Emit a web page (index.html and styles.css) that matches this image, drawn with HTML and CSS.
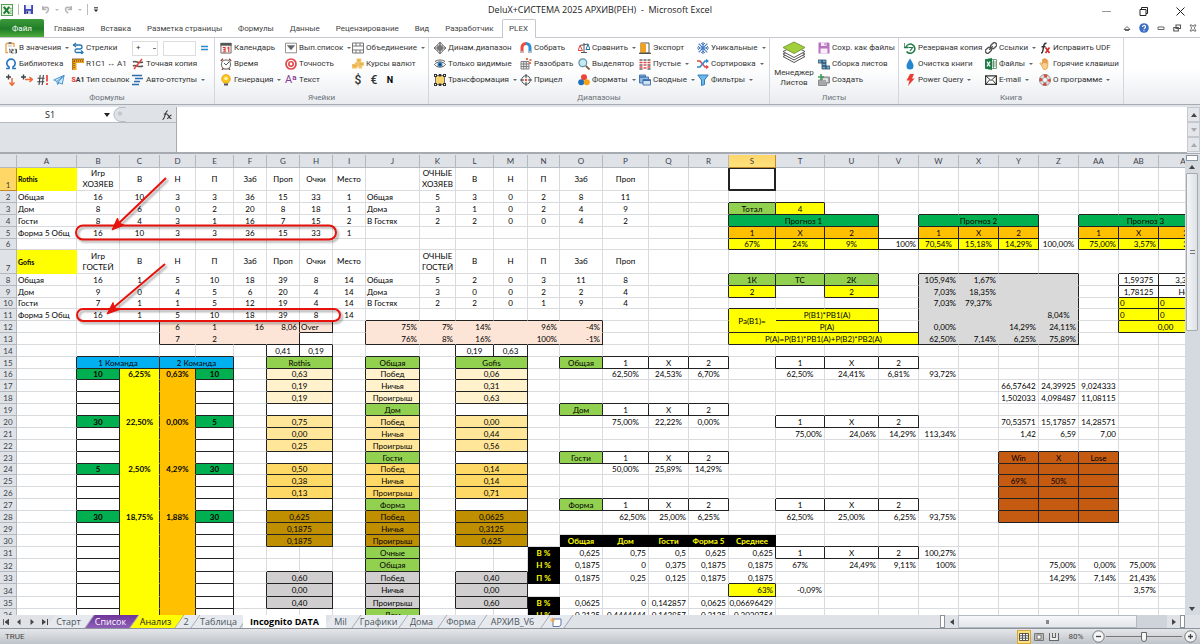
FILE: index.html
```html
<!DOCTYPE html>
<html lang="ru">
<head>
<meta charset="utf-8">
<title>DeluX+СИСТЕМА 2025 АРХИВ(РЕН) - Microsoft Excel</title>
<link rel="stylesheet" href="styles.css">
</head>
<body>
<svg class="defs" aria-hidden="true">
  <symbol id="i-paste" viewBox="0 0 12 12"><path d="M1 1.500h8v3.500M1 1.500v9h2" fill="none" stroke="#e8a04a" stroke-width="1.300"/><path d="M3.500 0h3v2h-3z" fill="#777"/><path d="M3 4h4" stroke="#aaa" stroke-width=".8"/><path d="M4 7.500 5 7v4M6.500 7.300h1.700v1.500H6.500V11h2M9.800 7.300h1.700V11H9.800M10 9h1.500" fill="none" stroke="#444" stroke-width=".9"/></symbol>
  <symbol id="i-arrows" viewBox="0 0 12 12"><path d="M1 3h7a2 2 0 0 1 0 4H4a2 2 0 0 0 0 3.500h7" fill="none" stroke="#2677b8" stroke-width="1.300"/><path d="M4 1 1.500 3 4 5M9 8.500l2 2-2 1.500" fill="none" stroke="#2677b8" stroke-width="1.200"/></symbol>
  <symbol id="i-omega" viewBox="0 0 12 12"><path d="M1 10.500h3v-1.500C2.500 8 1.800 6.800 1.800 5.300a4.200 4.200 0 0 1 8.400 0C10.200 6.800 9.500 8 8 9v1.500h3" fill="none" stroke="#2d78bd" stroke-width="1.700"/></symbol>
  <symbol id="i-ruler" viewBox="0 0 12 12"><path d="M0 1h12v4H4.500v7H0z" fill="#f0a21c"/><path d="M2 3h9M2 3v8" stroke="#5b3b10" stroke-width="1" stroke-dasharray="1 1"/><path d="M0 1h12M0 1v11" stroke="#6b4a17" stroke-width=".8"/></symbol>
  <symbol id="i-neq" viewBox="0 0 12 12"><path d="M1 4c3-2 5 2 10 0M1 8c3-2 5 2 10 0" fill="none" stroke="#555" stroke-width="1.600"/><path d="M2 11 10 1" stroke="#e8443c" stroke-width="1.500"/></symbol>
  <symbol id="i-plusdown" viewBox="0 0 12 12"><path d="M1 3h5M3.500.5v5" stroke="#444" stroke-width="1.400"/><path d="M7 4v7M4.500 8.500 7 11.300 9.500 8.500" fill="none" stroke="#ef6a35" stroke-width="1.500"/></symbol>
  <symbol id="i-plusright" viewBox="0 0 12 12"><path d="M0 3h5M2.500.5v5" stroke="#444" stroke-width="1.400"/><path d="M4 5.500h7M8.500 3l2.800 2.500L8.500 8" fill="none" stroke="#ef6a35" stroke-width="1.500"/></symbol>
  <symbol id="i-hash" viewBox="0 0 12 12"><path d="M3.200 1 2 11M6.400 1 5.200 11M.5 4.200h7M.3 7.800h7" stroke="#444" stroke-width="1.100"/><path d="M10 1v6.500M10 9v2" stroke="#ef3e36" stroke-width="1.700"/></symbol>
  <symbol id="i-plane" viewBox="0 0 13 12"><path d="M12 1 .8 6l3.400 1.500L12 1 5.500 8.500l4.500 2zM4.200 7.500 5 11l1.500-2" fill="#d8ebf8" stroke="#3f8ecb" stroke-width="1"/></symbol>
  <symbol id="i-indent" viewBox="0 0 12 12"><path d="M0 1.500h10M3 4.500h8M2 7.500h6M0 10.500h7" stroke="#2c6cae" stroke-width="1.700"/></symbol>
  <symbol id="i-cal" viewBox="0 0 13 12"><path d="M1 1h11v10.500H1z" fill="#f4f4f4" stroke="#666"/><path d="M.5.500h12v3H.5z" fill="#555"/><path d="M3 5.500h2.500v4.800H3M3.500 7.800h2M8 6.200l1.500-.9v5.200" fill="none" stroke="#e0352b" stroke-width="1.200"/></symbol>
  <symbol id="i-clock" viewBox="0 0 12 12"><circle cx="6" cy="6.500" r="4.600" fill="#fff" stroke="#777" stroke-width="1.100"/><path d="m4 5 2 2 3-3" fill="none" stroke="#555"/><path d="M.8 3 3 .8M11.200 3 9 .8M2 12l1.200-1.500M10 12l-1.200-1.500" stroke="#8b3e3a" stroke-width="1.300"/></symbol>
  <symbol id="i-bulb" viewBox="0 0 12 12"><path d="M6 .5a4.300 4.300 0 0 0-2.500 7.800V9h5v-.7A4.300 4.300 0 0 0 6 .5z" fill="#ffc61a" stroke="#e89b14" stroke-width=".8"/><circle cx="6" cy="4.500" r="1.800" fill="#fff3a8"/><path d="M4 9.500h4v2H4z" fill="#555"/></symbol>
  <symbol id="i-drop" viewBox="0 0 13 12"><path d="M.5.8h12v10.400H.5z" fill="#fff" stroke="#888"/><path d="M2 3h9L6.500 8.500z" fill="#666"/></symbol>
  <symbol id="i-target" viewBox="0 0 12 12"><circle cx="6" cy="6" r="5" fill="none" stroke="#e2474a" stroke-width="1.700"/><circle cx="6" cy="6" r="2.200" fill="none" stroke="#e2474a" stroke-width="1.600"/></symbol>
  <symbol id="i-grid" viewBox="0 0 12 12"><path d="M.5 1h11v10H.5zM.5 4h11M.5 8h11M4 1v3M8 1v3M4 8v3M8 8v3" fill="#fff" stroke="#777"/></symbol>
  <symbol id="i-coins" viewBox="0 0 13 12"><path d="M5 0h5v4h3v4h-2v3H7V8L5 11H0V6h3V4h2z" fill="#f2c266"/><path d="M1 8h4M6 2h3M8 6h4" stroke="#dca23c"/></symbol>
  <symbol id="i-dyn" viewBox="0 0 12 12"><path d="m6 0 2 2.500L12 6 8 9.500 6 12 4 9.500 0 6l4-3.500z" fill="none" stroke="#666"/><path d="M6 1v10M1 6h10M4 4h4v4H4z" stroke="#555" fill="none" stroke-width="1.200"/></symbol>
  <symbol id="i-eye" viewBox="0 0 12 12"><path d="M.5 6.500C3 3 9 3 11.500 6.500 9 10 3 10 .5 6.500z" fill="#fff" stroke="#555"/><circle cx="6" cy="6.500" r="2.500" fill="#2a7fc0"/><circle cx="6" cy="6.500" r="1" fill="#123"/><path d="M1 3.500c3-2 7-2 10 0" fill="none" stroke="#555"/></symbol>
  <symbol id="i-trans" viewBox="0 0 12 12"><path d="M1.500 1.500h9v9h-9z" fill="#f8d36c" stroke="#555" stroke-width=".8"/><path d="M0 0h3v3H0zM9 0h3v3H9zM0 9h3v3H0zM9 9h3v3H9zM4.800 0h2.500v2.500H4.800zM4.800 9.500h2.500V12H4.800z" fill="#333"/><path d="M1 1h1v1H1zM10 1h1v1h-1zM1 10h1v1H1zM10 10h1v1h-1z" fill="#fff"/></symbol>
  <symbol id="i-magnet" viewBox="0 0 12 12"><path d="M2 11V5.500a4 4 0 0 1 4-4" fill="none" stroke="#ef4a3f" stroke-width="3"/><path d="M10 11V5.500a4 4 0 0 0-4-4" fill="none" stroke="#2e8fd6" stroke-width="3"/><path d="M.5 9h3v2h-3zM8.500 9h3v2h-3z" fill="#bbb"/></symbol>
  <symbol id="i-split" viewBox="0 0 12 12"><path d="M1 3.500h8V11H1zM1 6h8M1 8.500h8M3.700 3.500V11M6.300 3.500V11" fill="#eee" stroke="#777" stroke-width=".9"/><path d="M6 0h2v2H6zM9.500 1h2v2h-2zM9 4h2v2H9z" fill="#e8734f"/></symbol>
  <symbol id="i-aim" viewBox="0 0 12 12"><circle cx="6" cy="6" r="4.300" fill="none" stroke="#555"/><path d="M6 0v4M6 8v4M0 6h4M8 6h4" stroke="#444"/><circle cx="6" cy="6" r="1.200" fill="#e8443c"/></symbol>
  <symbol id="i-scales" viewBox="0 0 12 12"><path d="M6 1v9M3 10.500h6M2 3.500 10 2" stroke="#555"/><path d="M2 3.500 0 8.500h4.500z" fill="#fff" stroke="#e8443c"/><path d="M10 2 8 7.500h4z" fill="#fff" stroke="#2c6cae"/></symbol>
  <symbol id="i-lens" viewBox="0 0 12 12"><circle cx="4.800" cy="4.800" r="3.900" fill="#c9e9f4" stroke="#5d94a8" stroke-width="1.200"/><path d="m8 8 3.500 3.500" stroke="#8a5c3a" stroke-width="1.800"/></symbol>
  <symbol id="i-rgb" viewBox="0 0 12 12"><circle cx="6" cy="3.300" r="3" fill="#ef4136"/><circle cx="3.200" cy="8.300" r="3" fill="#1d6fb8"/><circle cx="8.800" cy="8.300" r="3" fill="#f7a11b"/></symbol>
  <symbol id="i-door" viewBox="0 0 12 12"><path d="M2 1h8v10H2z" fill="#fff" stroke="#555"/><path d="M1.500.5 7 2v9.500l-5.500-1z" fill="#f2a11f"/><path d="M0 11.300h12" stroke="#444" stroke-width="1.200"/></symbol>
  <symbol id="i-empty" viewBox="0 0 12 12"><path d="M.5 2h3M4.500 2h3M8.500 2h3M.5 7h3M8.500 7h3M.5 11h3M8.500 11h3" stroke="#666" stroke-width="1.700"/><path d="M.5 4.500h3M4.500 4.500h3M8.500 4.500h3M4.500 7h3M.5 9h3M8.500 9h3M4.500 10h3" stroke="#e2474a" stroke-width="1.500"/></symbol>
  <symbol id="i-pivot" viewBox="0 0 12 12"><path d="M.5 1h6v2h-6zM.5 3h9v6h-9z" fill="#8db9e4" stroke="#3a6ea5" stroke-width=".9"/><path d="M4 5.500h7.500V11H4z" fill="#cfe2f5" stroke="#3a6ea5" stroke-width=".9"/><path d="M4 6.500h7.500" stroke="#3a6ea5"/></symbol>
  <symbol id="i-snow" viewBox="0 0 12 12"><path d="M6 0v12M0 6h12M1.700 1.700l8.600 8.600M10.300 1.700l-8.600 8.600" stroke="#4a7cc0" stroke-width="1.200"/><path d="m4 1 2 2 2-2M4 11l2-2 2 2M1 4l2 2-2 2M11 4 9 6l2 2" fill="none" stroke="#4a7cc0"/></symbol>
  <symbol id="i-shuffle" viewBox="0 0 12 12"><path d="M0 3h3l5 6h3" fill="none" stroke="#e2474a" stroke-width="1.500"/><path d="M0 9h3l5-6h3" fill="none" stroke="#2c8ccf" stroke-width="1.500"/><path d="m9 .8 3 2.200-3 2.200z" fill="#2c8ccf"/><path d="m9 6.800 3 2.200-3 2.200z" fill="#e2474a"/></symbol>
  <symbol id="i-funnel" viewBox="0 0 12 12"><path d="M.8 1h10.400L7.500 6v4.500l-3 1V6z" fill="#6db6ea" stroke="#2f7fbf"/></symbol>
  <symbol id="i-layers" viewBox="0 0 24 24"><path d="m12 11 11 5.500L12 22.500 1 16.500z" fill="#fff" stroke="#555"/><path d="m12 8.500 11 5.500-11 6L1 14z" fill="#fff" stroke="#555"/><path d="m12 6 11 5.500-11 6-11-6z" fill="#fff" stroke="#555"/><path d="m12 2 11 5.500-11 6L1 7.500z" fill="#a2cf3c" stroke="#7b9c3a"/></symbol>
  <symbol id="i-disk" viewBox="0 0 12 12"><path d="M.5.5h10l1 1v10H.5z" fill="#b873c0"/><path d="M3 .5h5.500V4H3zM2.500 6.500h7v5h-7z" fill="#f7ecf8"/><path d="M6.500 1h1.200v2.300H6.500z" fill="#b873c0"/></symbol>
  <symbol id="i-sheets" viewBox="0 0 12 12"><path d="M0 2h4v3H0zM4 2h4v3H4zM4 5h4v3H4zM4 8h4v3H4zM8 8h4v3H8z" fill="#62aee0" stroke="#345" stroke-width=".8"/></symbol>
  <symbol id="i-create" viewBox="0 0 12 12"><path d="M4 3h7.500v6h-3v2.500h-8V6H4z" fill="#a8a8a8" stroke="#8c8c8c"/><path d="M5 5h4v3" fill="none" stroke="#eee" stroke-width="1.500"/><path d="M0 3h6M3 0v6" stroke="#3f9b58" stroke-width="1.600"/></symbol>
  <symbol id="i-backup" viewBox="0 0 12 12"><path d="M2 5a4.600 4.600 0 1 1 .6 4.500" fill="none" stroke="#1f7a45" stroke-width="1.500"/><path d="M0 1v4.500h4.500" fill="none" stroke="#1f7a45" stroke-width="1.400"/><path d="M4.500 5.500h4L6 9" fill="none" stroke="#1f7a45" stroke-width="1.200"/></symbol>
  <symbol id="i-water" viewBox="0 0 12 12"><path d="M6 .5C8 4 9.500 5.500 9.500 8a3.500 3.500 0 0 1-7 0C2.500 5.500 4 4 6 .5z" fill="#2386cf"/></symbol>
  <symbol id="i-bolt" viewBox="0 0 12 12"><path d="M6 0h4L8 4.500h2.500L4 12l1.500-5.500h-3z" fill="#ec3c35"/></symbol>
  <symbol id="i-link" viewBox="0 0 12 12"><g transform="rotate(-42 6 6)" fill="none" stroke="#555" stroke-width="1.400"><rect x="-.8" y="3.800" width="6.500" height="4.400" rx="2.200"/><rect x="6.300" y="3.800" width="6.500" height="4.400" rx="2.200"/><path d="M3.500 6h5"/></g></symbol>
  <symbol id="i-xls" viewBox="0 0 12 12"><path d="M6 1.500h5.500v9H6zM6 4h5M6 6h5M6 8h5M8.500 1.500v9" fill="#fff" stroke="#4a8a62" stroke-width=".8"/><path d="M0 1.200 7 0v12l-7-1.200z" fill="#1f7a45"/><path d="m2 3.700 3 4.600M5 3.700 2 8.300" stroke="#fff" stroke-width="1.200"/></symbol>
  <symbol id="i-mail" viewBox="0 0 12 12"><path d="M.6 1.800h10.800v8.500H.6z" fill="#fff" stroke="#333" stroke-width="1.200"/><path d="m1 2 5 4.500L11 2M1 10l3.500-4M11 10 7.500 6" fill="none" stroke="#333"/></symbol>
  <symbol id="i-fx" viewBox="0 0 12 12"><path d="M2 11c2 0 1.800-2 2.300-5S5 1 7.500 1.300M2.500 4.800h4" fill="none" stroke="#333" stroke-width="1.400"/><path d="m6.500 5.500 4 5.500M10.500 5.500l-4 5.500" stroke="#d02b28" stroke-width="1.700"/></symbol>
  <symbol id="i-hand" viewBox="0 0 12 12"><path d="M3 8 .8 5.500l1-.8L3.500 6V1.500h1.300V5V.8h1.300V5 1h1.300v4.500V2.300h1.400V8c0 2.500-1.500 3.700-3.200 3.700S4 10.500 3 8z" fill="#f9cf8e" stroke="#e0963e" stroke-width=".8"/></symbol>
  <symbol id="i-ring" viewBox="0 0 12 12"><circle cx="6" cy="6" r="4.200" fill="none" stroke="#ddd" stroke-width="3"/><circle cx="6" cy="6" r="4.200" fill="none" stroke="#df4a3c" stroke-width="3" stroke-dasharray="3.300 3.300" stroke-dashoffset="1.650"/><circle cx="6" cy="6" r="5.600" fill="none" stroke="#777" stroke-width=".6"/><circle cx="6" cy="6" r="2.500" fill="none" stroke="#777" stroke-width=".6"/></symbol>
</svg>

<header class="titlebar">
  <div class="quick">
    <svg class="logo" viewBox="0 0 13 13"><rect x=".5" y=".5" width="12" height="12" fill="#e9f4e4" stroke="#4c9a4c"/><path d="m3 3 6 7.500M9 3 3 10.500" stroke="#1f7a34" stroke-width="2.200"/><path d="M9.500 5h2M9.500 7.500h2M9.500 10h2" stroke="#4c9a4c"/></svg>
    <span class="bar"></span>
    <button class="q" aria-label="Сохранить"><svg viewBox="0 0 10 10"><path d="M0 0h10v10H0z" fill="#3b49b5"/><path d="M2 0h6v4.500H2z" fill="#eef"/><path d="M2.500 6.500h5V10h-5z" fill="#c9cdea"/><path d="M3 7h1.500v2.500H3z" fill="#223"/></svg></button>
    <button class="q undo" aria-label="Отменить"><svg viewBox="0 0 10 10"><path d="M2 1v4h4M2.300 4.500C4 1.500 8.500 2 8.300 5c0 2-1.300 3-3 4" fill="none" stroke="#b4b4b4" stroke-width="1.700"/></svg></button>
    <i class="dd pale"></i>
    <button class="q" aria-label="Вернуть"><svg viewBox="0 0 10 10"><path d="M8 1v4H4M7.700 4.500C6 1.500 1.500 2 1.700 5c0 2 1.300 3 3 4" fill="none" stroke="#b4b4b4" stroke-width="1.700"/></svg></button>
    <i class="dd pale"></i>
    <span class="bar"></span>
    <button class="q tiny" aria-label="Настройка панели"><svg viewBox="0 0 6 6"><path d="M1 .8h4" stroke="#222"/><path d="M.8 2.500h4.400L3 5z" fill="#222"/></svg></button>
  </div>
  <h1>DeluX+СИСТЕМА 2025 АРХИВ(РЕН) &nbsp;- &nbsp;Microsoft Excel</h1>
  <div class="winbtns">
    <button aria-label="Свернуть"><svg viewBox="0 0 9 9"><path d="M0 4.500h9" stroke="#999"/></svg></button>
    <button aria-label="Развернуть"><svg viewBox="0 0 9 9"><path d="M1 2.500h6v6H1zM2.500 2.500V.5h6v6H7" fill="none" stroke="#222"/></svg></button>
    <button aria-label="Закрыть"><svg viewBox="0 0 9 9"><path d="m.5.5 8 8M8.500.5l-8 8" stroke="#222"/></svg></button>
  </div>
</header>

<nav class="tabs">
  <button class="file">Файл</button>
  <button>Главная</button><button>Вставка</button><button>Разметка страницы</button><button>Формулы</button><button>Данные</button><button>Рецензирование</button><button>Вид</button><button>Разработчик</button><button class="on">PLEX</button>
  <div class="tabtools">
    <button aria-label="Свернуть ленту"><svg viewBox="0 0 8 8"><path d="M1 5.500 4 2.500l3 3zM2 6.500h4" fill="none" stroke="#666"/></svg></button>
    <button class="help" aria-label="Справка"><svg viewBox="0 0 10 10"><circle cx="5" cy="5" r="4.800" fill="#3d6fc4"/><path d="M3.500 4a1.500 1.500 0 1 1 2.200 1.300q-.7.4-.7 1M5 7.300v1" fill="none" stroke="#fff" stroke-width="1.200"/></svg></button>
    <button aria-label="Свернуть окно"><svg viewBox="0 0 8 8"><path d="M1 3h6v2.500H1z" fill="none" stroke="#666"/></svg></button>
    <button aria-label="Восстановить окно"><svg viewBox="0 0 8 8"><path d="M3 1h4.500v3.500H3zM.8 3.500h4.500V7H.8z" fill="#fff" stroke="#555" stroke-width="1.100"/></svg></button>
    <button aria-label="Закрыть окно"><svg viewBox="0 0 8 8"><path d="M1 1h2l1 1.500L5 1h2L5.300 4 7 7H5L4 5.500 3 7H1l1.700-3z" fill="#fff" stroke="#666" stroke-width=".9"/></svg></button>
  </div>
</nav>

<section class="ribbon">
  <div class="group g1">
    <div class="cells">
      <button><svg><use href="#i-paste"/></svg>В значения<i class="dd"></i></button>
      <button><svg><use href="#i-arrows"/></svg>Стрелки</button>
      <div class="combo">
        <select aria-label="Операция"><option>+</option></select>
        <input type="text" aria-label="Значение">
        <button aria-label="Применить"><svg viewBox="0 0 8 8"><path d="M0 2.500h7M0 5.500h7" stroke="#2b8ad0" stroke-width="1.600"/></svg></button>
      </div>
      <button><svg><use href="#i-omega"/></svg>Библиотека</button>
      <button><svg><use href="#i-ruler"/></svg>R1C1 ↔ A1</button>
      <button><svg><use href="#i-neq"/></svg>Точная копия</button>
      <div class="four">
        <button aria-label="Вниз"><svg><use href="#i-plusdown"/></svg></button>
        <button aria-label="Вправо"><svg><use href="#i-plusright"/></svg></button>
        <button aria-label="Ошибки"><svg><use href="#i-hash"/></svg></button>
        <button aria-label="Отправить"><svg><use href="#i-plane"/></svg></button>
      </div>
      <button><span class="sa1"><b>S</b>A1</span>Тип ссылок</button>
      <button><svg><use href="#i-indent"/></svg>Авто-отступы<i class="dd"></i></button>
    </div>
    <p>Формулы</p>
  </div>
  <div class="group g2">
    <div class="cells">
      <button><svg><use href="#i-cal"/></svg>Календарь</button>
      <button><svg><use href="#i-drop"/></svg>Вып.список<i class="dd"></i></button>
      <button><svg><use href="#i-grid"/></svg>Объединение<i class="dd"></i></button>
      <button><svg><use href="#i-clock"/></svg>Время</button>
      <button><svg><use href="#i-target"/></svg>Точность</button>
      <button><svg><use href="#i-coins"/></svg>Курсы валют</button>
      <button><svg><use href="#i-bulb"/></svg>Генерация<i class="dd"></i></button>
      <button><span class="aa">A<sup>a</sup></span>Текст</button>
      <div class="money"><button>$</button><button>€</button><button class="n">N</button></div>
    </div>
    <p>Ячейки</p>
  </div>
  <div class="group g3">
    <div class="cells">
      <button><svg><use href="#i-dyn"/></svg>Динам.диапазон</button>
      <button><svg><use href="#i-magnet"/></svg>Собрать</button>
      <button><svg><use href="#i-scales"/></svg>Сравнить<i class="dd"></i></button>
      <button><svg><use href="#i-door"/></svg>Экспорт</button>
      <button><svg><use href="#i-snow"/></svg>Уникальные<i class="dd"></i></button>
      <button><svg><use href="#i-eye"/></svg>Только видимые</button>
      <button><svg><use href="#i-split"/></svg>Разобрать</button>
      <button><svg><use href="#i-lens"/></svg>Выделятор</button>
      <button><svg><use href="#i-empty"/></svg>Пустые<i class="dd"></i></button>
      <button><svg><use href="#i-shuffle"/></svg>Сортировка<i class="dd"></i></button>
      <button><svg><use href="#i-trans"/></svg>Трансформация<i class="dd"></i></button>
      <button><svg><use href="#i-aim"/></svg>Прицел</button>
      <button><svg><use href="#i-rgb"/></svg>Форматы<i class="dd"></i></button>
      <button><svg><use href="#i-pivot"/></svg>Сводные<i class="dd"></i></button>
      <button><svg><use href="#i-funnel"/></svg>Фильтры<i class="dd"></i></button>
    </div>
    <p>Диапазоны</p>
  </div>
  <div class="group g4">
    <div class="cells">
      <button class="big"><svg><use href="#i-layers"/></svg><span>Менеджер<br>Листов</span></button>
      <button><svg><use href="#i-disk"/></svg>Сохр. как файлы</button>
      <button><svg><use href="#i-sheets"/></svg>Сборка листов</button>
      <button><svg><use href="#i-create"/></svg>Создать</button>
    </div>
    <p>Листы</p>
  </div>
  <div class="group g5">
    <div class="cells">
      <button><svg><use href="#i-backup"/></svg>Резервная копия</button>
      <button><svg><use href="#i-link"/></svg>Ссылки<i class="dd"></i></button>
      <button><svg><use href="#i-fx"/></svg>Исправить UDF</button>
      <button><svg><use href="#i-water"/></svg>Очистка книги</button>
      <button><svg><use href="#i-xls"/></svg>Файлы<i class="dd"></i></button>
      <button><svg><use href="#i-hand"/></svg>Горячие клавиши</button>
      <button><svg><use href="#i-bolt"/></svg>Power Query<i class="dd"></i></button>
      <button><svg><use href="#i-mail"/></svg>E-mail<i class="dd"></i></button>
      <button><svg><use href="#i-ring"/></svg>О программе<i class="dd"></i></button>
    </div>
    <p>Книга</p>
  </div>
</section>

<section class="formula">
  <div class="namebox">
    <div class="namerow">
      <input type="text" value="S1" aria-label="Имя ячейки">
      <button class="namedd" aria-label="Список имён"><svg viewBox="0 0 6 4"><path d="M0 0h6L3 4z" fill="#222"/></svg></button>
      <div class="fxbar"><svg class="knob" viewBox="0 0 14 16"><path d="M13 .5H8A7.500 7.500 0 0 0 8 15.500h5" fill="#dfe3e8" stroke="#b4bac2"/><circle cx="7" cy="7" r="2.300" fill="#c3c8ce"/></svg><button aria-label="Вставить функцию"><svg class="fx" viewBox="0 0 10 10"><path d="M.5 9.500C3 9.500 3 .8 5.800.8M1.800 4h3.500M5 5c2-1 1.500 4 4.500 3.500M9.500 5C7.500 5 7 8.500 5 8.500" fill="none" stroke="#333" stroke-width="1.100"/></svg></button></div>
    </div>
  </div>
  <textarea aria-label="Строка формул"></textarea>
  <div class="fscroll"><button aria-label="Вверх"><svg viewBox="0 0 6 4"><path d="M0 4h6L3 0z" fill="#444"/></svg></button><button class="fend" aria-label="Вниз"><svg viewBox="0 0 6 4"><path d="M0 0h6L3 4z" fill="#aaa"/></svg></button><button aria-label="Развернуть строку"><svg viewBox="0 0 6 4"><path d="M0 4h6L3 0z" fill="#aaa"/></svg></button></div>
</section>

<main class="sheet">
  <div class="view">
    <table id="grid"></table>
    <svg class="marks" viewBox="0 0 360 180" aria-hidden="true">
      <g class="shade"><rect x="76" y="70.500" width="260" height="14" rx="7"/><rect x="77" y="154" width="263" height="12" rx="6"/><path d="m166 23-48 46M165 109l-52 44"/></g>
      <g class="ink"><rect x="76" y="70.500" width="260" height="14" rx="7"/><rect x="77" y="154" width="263" height="12" rx="6"/><path d="m166 23-48 46M165 109l-52 44"/></g>
      <path class="tip" d="m112 75 5.500-12 1.500 5 5 2zM107 159l6-11.500 1.500 5 5 2z"/>
    </svg>
  </div>
  <div class="vscroll">
    <div class="splitbox"></div>
    <button aria-label="Вверх"><svg viewBox="0 0 6 4"><path d="M0 4h6L3 0z" fill="#444"/></svg></button>
    <div class="vthumb"></div>
    <div class="vtrack"></div>
    <button aria-label="Вниз"><svg viewBox="0 0 6 4"><path d="M0 0h6L3 4z" fill="#444"/></svg></button>
  </div>
</main>

<footer>
  <div class="sheettabs">
    <div class="navs">
      <button aria-label="Первый"><svg viewBox="0 0 6 6"><path d="M.5 0v6M6 0v6L2 3z" fill="#444" stroke="#444" stroke-width=".8"/></svg></button>
      <button aria-label="Предыдущий"><svg viewBox="0 0 6 6"><path d="M4.500 0v6L1 3z" fill="#444"/></svg></button>
      <button aria-label="Следующий"><svg viewBox="0 0 6 6"><path d="M1.500 0v6L5 3z" fill="#444"/></svg></button>
      <button aria-label="Последний"><svg viewBox="0 0 6 6"><path d="M0 0v6l4-3z" fill="#444"/><path d="M5.500 0v6" stroke="#444"/></svg></button>
    </div>
    <button class="st w1">Старт</button><button class="st w2 purple">Список</button><button class="st w2 yel">Анализ</button><button class="st w3">2</button><button class="st w4">Таблица</button><button class="st w5 cur">Incognito DATA</button><button class="st w6">Mil</button><button class="st w7">Графики</button><button class="st w8">Дома</button><button class="st w9">Форма</button><button class="st w10">АРХИВ_V6</button><button class="st w11" aria-label="Новый лист"><svg viewBox="0 0 12 10"><path d="M3 2h8v6l-2 1.500H3z" fill="#fff" stroke="#5e78a8"/><path d="M0 3h5M2.500.5v5M.8 1.200l3.500 3.500M4.300 1.200.8 4.700" stroke="#f0a83c" stroke-width=".8"/></svg></button>
    <div class="hscroll">
      <span class="hbox"></span>
      <button aria-label="Влево"><svg viewBox="0 0 4 6"><path d="M4 0v6L0 3z" fill="#444"/></svg></button>
      <div class="hthumb"></div><div class="htrack"></div>
      <button aria-label="Вправо"><svg viewBox="0 0 4 6"><path d="M0 0v6l4-3z" fill="#444"/></svg></button>
      <span class="hbox"></span>
    </div>
  </div>
  <div class="status">
    <span class="ready">TRUE</span>
    <div class="viewbtns">
      <button class="on" aria-label="Обычный"><svg viewBox="0 0 10 8"><path d="M.5.5h9v7h-9zM.5 2.800h9M.5 5.200h9M3.500.5v7M6.500.5v7" fill="#fff" stroke="#555"/></svg></button>
      <button aria-label="Разметка"><svg viewBox="0 0 10 8"><path d="M.5.5h9v7h-9z" fill="#bbb" stroke="#777"/><path d="M3 2h4v4H3z" fill="#fff" stroke="#777"/></svg></button>
      <button aria-label="Страничный"><svg viewBox="0 0 10 8"><path d="M.5 0v7.500h9V0M3.500 0v4.500h3V0M6.500 0v4.500" fill="#eee" stroke="#666" stroke-width="1.200"/></svg></button>
      <button class="zoomval">80%</button>
      <button class="round" aria-label="Уменьшить"><svg viewBox="0 0 13 13"><circle cx="6.500" cy="6.500" r="5.700" fill="#f4f5f6" stroke="#777"/><path d="M4 6.500h5" stroke="#444" stroke-width="1.300"/></svg></button>
      <input type="range" min="10" max="190" value="100" aria-label="Масштаб">
      <button class="round" aria-label="Увеличить"><svg viewBox="0 0 13 13"><circle cx="6.500" cy="6.500" r="5.700" fill="#f4f5f6" stroke="#777"/><path d="M4 6.500h5M6.500 4v5" stroke="#444" stroke-width="1.300"/></svg></button>
    </div>
  </div>
</footer>
<script src="sheet.js"></script>
</body>
</html>
```
FILE: styles.css
```css
* { box-sizing: border-box; }
body { margin: 0; height: 100vh; display: flex; flex-direction: column; overflow: hidden; background: #fff; color: #333; font: 8px/12px Roboto, "Open Sans", sans-serif; }
button, input, select, textarea { font: inherit; color: inherit; margin: 0; padding: 0; border: 0; background: none; border-radius: 0; outline: 0; }
button { display: flex; align-items: center; white-space: nowrap; }
svg { flex: none; display: block; }
h1, p { margin: 0; font-weight: 400; }
.defs { display: none; }
.dd { border: 2px solid transparent; border-top-color: #666; border-bottom: 0; margin-left: 4px; flex: none; }
.dd.pale { border-top-color: #bbb; margin: 0; }

/* title bar */
.titlebar { height: 19px; flex: none; display: grid; grid-template-columns: 1fr auto 1fr; align-items: center; }
.titlebar h1 { font-family: "Open Sans", sans-serif; font-size: 9px; color: #222; }
.quick { display: flex; align-items: center; gap: 5px; padding-left: 1px; }
.logo { width: 12px; height: 12px; }
.bar { width: 1px; height: 11px; background: #bbb; }
.q svg { width: 9px; height: 9px; }
.q.undo { margin-left: 3px; }
.q.tiny svg { width: 6px; height: 6px; }
.winbtns { display: flex; justify-content: flex-end; gap: 28px; padding: 3px 15px 0 0; }
.winbtns svg { width: 9px; height: 9px; }

/* ribbon tabs */
.tabs { height: 19px; flex: none; display: flex; align-items: stretch; border-bottom: 1px solid #c5c9cf; color: #444; }
.tabs > button { padding: 1px 8px 0; }
.tabs .file { width: 44px; margin-right: 2px; justify-content: center; color: #fff; background: linear-gradient(#3d9a3a, #1f7d28 55%, #4eac3a); border-radius: 2px 2px 0 0; }
.tabs .on { width: 34px; justify-content: center; padding: 0; background: #fff; border: 1px solid #c5c9cf; border-bottom: 0; border-radius: 2px 2px 0 0; margin-bottom: -1px; }
.tabtools { margin-left: auto; display: flex; align-items: center; gap: 8px; padding-right: 3px; }
.tabtools svg { width: 8px; height: 8px; }
.tabtools .help svg { width: 10px; height: 10px; }

/* ribbon */
.ribbon { height: 67px; flex: none; display: flex; background: linear-gradient(#fff, #fff 45%, #e9ecef); border-bottom: 1px solid #a6abb2; }
.group { display: flex; flex-direction: column; justify-content: space-between; padding: 2px 0 0; border-right: 1px solid #d3d7db; }
.group p { text-align: center; color: #6a7078; }
.cells { display: grid; grid-auto-rows: 16px; }
.cells button { gap: 2px; overflow: visible; }
.cells svg { width: 12px; height: 12px; }
.cells .dd { margin-left: 2px; }
.g1 { width: 215px; }
.g1 .cells { grid-template-columns: 67px 60px 1fr; padding-left: 5px; }
.g2 { width: 214px; }
.g2 .cells { grid-template-columns: 65px 67px 1fr; padding-left: 5px; }
.g3 { width: 341px; }
.g3 .cells { grid-template-columns: 86px 58px 61px 58px 1fr; padding-left: 5px; }
.g4 { width: 129px; }
.g4 .cells { grid-template-columns: 48px 1fr; }
.g5 { width: 225px; }
.g5 .cells { grid-template-columns: 81px 54px 1fr; padding-left: 5px; }
.g4 .big { grid-row: span 3; flex-direction: column; justify-content: center; line-height: 10px; gap: 4px; }
.g4 .big svg { width: 24px; height: 24px; }
.combo { display: flex; align-items: center; gap: 5px; }
.combo select { width: 26px; height: 15px; border: 1px solid #ddd; padding-left: 3px; appearance: none; background: linear-gradient(#777, #777) 20px 6px / 3px 1px no-repeat, #fff; }
.combo input { width: 33px; height: 15px; border: 1px solid #ddd; background: #fff; }
.combo button svg { width: 8px; height: 8px; }
.four { display: flex; gap: 4px; }
.sa1 { font-weight: 700; font-size: 7px; width: 12px; display: inline-flex; justify-content: center; }
.sa1 b { color: #e8443c; }
.aa { width: 12px; font-size: 11px; color: #8a3e98; display: inline-flex; line-height: 12px; }
.aa sup { font-size: 8px; line-height: 8px; font-weight: 700; }
.money { display: flex; gap: 8px; padding-left: 2px; }
.money button { font-size: 12px; font-weight: 500; width: 8px; justify-content: center; }
.money .n { font-size: 9px; font-weight: 700; color: #000; }

/* formula bar */
.formula { height: 49px; flex: none; display: flex; padding-top: 2px; background: #dfe3e8; border-bottom: 1px solid #a6abb2; }
.namebox { width: 177px; border: 1px solid #a6abb2; border-width: 0 1px 1px 0; }
.namerow { display: flex; height: 16px; border-bottom: 1px solid #b4bac2; background: #fff; }
.namerow input { width: 100px; text-align: center; font-family: "Open Sans", sans-serif; font-size: 9px; color: #222; }
.namedd { width: 13px; justify-content: center; }
.namedd svg { width: 6px; height: 4px; }
.fxbar { flex: 1; display: flex; justify-content: space-between; background: linear-gradient(90deg, #fff 6px, #dfe3e8 6px); padding-right: 4px; }
.knob { width: 14px; height: 15px; }
.fx { width: 10px; height: 10px; }
.formula textarea { flex: 1; background: #fff; resize: none; border-bottom: 1px solid #a6abb2; }
.fscroll { width: 13px; display: flex; flex-direction: column; background: #e8ebef; }
.fscroll button { height: 15px; justify-content: center; background: #e3e7ec; border: 1px solid #c4c9cf; }
.fscroll svg, .vscroll svg { width: 6px; height: 4px; }

/* worksheet */
.sheet { flex: 1; min-height: 0; display: flex; background: #dfe3e8; padding-top: 1px; }
.view { flex: 1; min-width: 0; overflow: hidden; position: relative; background: #fff; }
#grid { table-layout: fixed; border-collapse: separate; border-spacing: 0; width: 0; font: 8px/10px Lato, "Open Sans", sans-serif; color: #000; }
#grid th, #grid td { padding: 0; border: 0 solid #d9dbde; border-width: 0 1px 1px 0; text-align: center; vertical-align: middle; white-space: nowrap; overflow: hidden; font-weight: 400; }
#grid th { background: #dfe3e8; border-color: #b2b8c0; color: #3b4148; vertical-align: bottom; }
#grid thead th { vertical-align: middle; }
#grid thead .sel { background: linear-gradient(#fdd66b, #ffe27c); border-color: #c28a30; }
#grid tbody .sel { background: #ffd766; border-color: #c28a30; }
#grid .r { text-align: right; padding-right: 2px; }
#grid .l { text-align: left; padding-left: 1px; }
#grid .b { font-weight: 700; }
#grid .wrap { white-space: normal; line-height: 11px; }
.h11 { height: 11px; } .h12 { height: 12px; } .h13 { height: 13px; } .h23 { height: 23px; } .h24 { height: 24px; }
#grid .yellow { background: #ff0; border-color: #ff0; }
#grid .orange { background: #ffc000; border-color: #ffc000; }
#grid .green { background: #00b050; border-color: #00b050; }
#grid .lime { background: #92d050; border-color: #92d050; }
#grid .blue { background: #00b0f0; border-color: #00b0f0; }
#grid .peach { background: #fce4d6; border-color: #fce4d6; }
#grid .cream { background: #fff2cc; border-color: #fff2cc; }
#grid .gold1 { background: #ffe699; border-color: #ffe699; }
#grid .gold2 { background: #ffd966; border-color: #ffd966; }
#grid .gold3 { background: #bf8f00; border-color: #bf8f00; }
#grid .grey { background: #d0cece; border-color: #d0cece; }
#grid .silver { background: #d9d9d9; border-color: #d9d9d9; }
#grid .rust { background: #c55a11; border-color: #c55a11; }
#grid .black { background: #000; border-color: #000; color: #ff0; font-weight: 700; }
#grid .white { background: #fff; border-color: #fff; }
#grid .kr { border-right-color: #222; }
#grid .kb { border-bottom-color: #222; }
#grid .team { font-size: 7px; }
#grid .active { box-shadow: inset 1px 1px #222, inset -1px -1px #222; }
.marks { position: absolute; left: 0; top: 0; width: 360px; height: 180px; }
.marks g { fill: none; stroke-width: 2; }
.marks .ink { stroke: #e8120c; }
.marks .shade { stroke: #000; opacity: .35; transform: translate(2px, 2px); filter: blur(1px); }
.tip { fill: #e8120c; stroke: #e8120c; }
.vscroll { width: 15px; flex: none; display: flex; flex-direction: column; padding: 0 2px 0 1px; background: #d5dae0; }
.vscroll button { height: 12px; flex: none; justify-content: center; }
.splitbox { height: 6px; border: 1px solid #8d939b; background: #fff; flex: none; }
.vthumb { height: 158px; flex: none; border: 1px solid #a6abb2; border-radius: 1px; background: linear-gradient(#777, #777) 3px 76px / 5px 1px no-repeat, linear-gradient(#777, #777) 3px 79px / 5px 1px no-repeat, linear-gradient(90deg, #f4f5f7, #dde1e6); }
.vtrack { flex: 1; }

/* sheet tabs */
footer { flex: none; }
.sheettabs { height: 13px; display: flex; align-items: stretch; background: #dfe3e8; font-family: "Open Sans", sans-serif; font-size: 9px; padding-right: 15px; color: #4b5560; }
.navs { width: 49px; display: flex; align-items: center; gap: 7px; padding-left: 3px; }
.navs svg { width: 6px; height: 6px; }
.st { position: relative; z-index: 0; justify-content: center; padding: 0; }
.st::before { content: ""; position: absolute; z-index: -1; inset: 0 -2px 0 2px; background: #e6e9ed; border-right: 1px solid #9aa1a9; transform: skewX(-35deg); }
.st.purple { color: #fff; }
.st.purple::before { background: linear-gradient(#6f3399, #8f5fb8); }
.st.yel { color: #222; }
.st.yel::before { background: #ff0; }
.st.cur { font-weight: 700; color: #000; background: #fff; z-index: 1; }
.st.cur::before { display: none; }
.w1 { width: 39px; } .w2 { width: 45px; } .w3 { width: 16px; } .w4 { width: 49px; } .w5 { width: 83px; } .w6 { width: 29px; } .w7 { width: 47px; } .w8 { width: 39px; } .w9 { width: 40px; } .w10 { width: 63px; } .w11 { width: 23px; }
.w11 svg { width: 12px; height: 10px; }
.hscroll { width: 245px; margin-left: auto; display: flex; align-items: stretch; }
.hscroll svg { width: 4px; height: 6px; }
.hscroll button { width: 13px; justify-content: center; }
.hbox { width: 5px; border: 1px solid #8d939b; background: #fff; }
.hthumb { flex: 180; border: 1px solid #b4bac2; background: linear-gradient(90deg, #888, #888) center / 3px 4px no-repeat, linear-gradient(#f6f7f8, #e3e6ea); }
.htrack { flex: 30; background: #cfd4da; }

/* status bar */
.status { height: 16px; display: flex; align-items: center; justify-content: space-between; border-top: 1px solid #8d939b; background: linear-gradient(#e4e6e9, #bfc4ca); color: #444; }
.ready { padding-left: 5px; }
.viewbtns { display: flex; align-items: center; gap: 1px; padding-right: 3px; }
.viewbtns button { width: 14px; height: 14px; justify-content: center; }
.viewbtns .on { background: #ffe07a; border: 1px solid #d6a73c; }
.viewbtns svg { width: 10px; height: 8px; }
.viewbtns .round svg { width: 13px; height: 13px; }
.viewbtns .zoomval { width: 28px; }
.viewbtns input { width: 76px; height: 14px; appearance: none; background: linear-gradient(#777, #777) center / 100% 1px no-repeat; }
.viewbtns input::-webkit-slider-thumb { appearance: none; width: 6px; height: 10px; background: #f4f5f6; border: 1px solid #666; border-radius: 0 0 3px 3px; }
```
FILE: sheet.js
```js
const NAMES = 'A B C D E F G H I J K L M N O P Q R S T U V W X Y Z AA AB AC'.split(' ');
const WIDTHS = [60, 43, 40, 36, 38, 33, 33, 33, 33, 54, 36, 38, 34, 32, 43, 46, 40, 40, 47, 49, 54, 40, 40, 40, 40, 40, 40, 40, 54];
const HEIGHTS = [23, 12, 12, 12, 12, 11, 24, 12, 12, 11, 12, 12, 12, 12, 12, 11, 12, 12, 12, 12, 12, 12, 12, 11, 12, 12, 12, 12, 12, 12, 12, 13, 12, 13, 12, 12];

const cells = HEIGHTS.map(() => NAMES.map(() => ({ text: '', cls: new Set() })));

function parse(ref) {
  const [, name, row] = ref.match(/([A-Z]+)(\d+)/);
  return [+row - 1, NAMES.indexOf(name)];
}
function each(range, fn) {
  const [a, b = a] = range.split(':');
  const [r1, c1] = parse(a), [r2, c2] = parse(b);
  for (let r = r1; r <= r2; r++) for (let c = c1; c <= c2; c++) fn(cells[r][c], r, c, r1, c1, r2, c2);
}
/* values run to the right of the start cell, separated by | */
function put(ref, values, cls = '') {
  const [r, c] = parse(ref);
  values.split('|').forEach((v, i) => {
    if (!v) return;
    cells[r][c + i].text = v;
    cls.split(' ').filter(Boolean).forEach(k => cells[r][c + i].cls.add(k));
  });
}
/* values run downwards */
function down(ref, values, cls) {
  const [r, c] = parse(ref);
  values.split('|').forEach((v, i) => put(NAMES[c] + (r + 1 + i), v, cls));
}
function fill(range, cls) { each(range, cell => cell.cls.add(cls)); }
function outline(range) {
  each(range, (cell, r, c, r1, c1, r2, c2) => {
    if (c === c2) cell.cls.add('kr');
    if (r === r2) cell.cls.add('kb');
    if (c === c1 && c > 0) cells[r][c - 1].cls.add('kr');
    if (r === r1 && r > 0) cells[r - 1][c].cls.add('kb');
  });
}
function box(range) { each(range, (cell, r, c) => outline(NAMES[c] + (r + 1))); }
function merge(range, text, cls = '') {
  const [a, b] = range.split(':'), [r1, c1] = parse(a), [r2, c2] = parse(b);
  each(range, cell => { cell.hidden = true; });
  const first = cells[r1][c1];
  first.hidden = false;
  first.span = [r2 - r1 + 1, c2 - c1 + 1];
  first.text = text;
  cls.split(' ').filter(Boolean).forEach(k => first.cls.add(k));
  outline(range);
}

/* team statistics */
put('A1', 'Rothis', 'yellow b l team');
put('B1', 'Игр ХОЗЯЕВ|В|Н|П|Заб|Проп|Очки|Место||ОЧНЫЕ ХОЗЯЕВ|В|Н|П|Заб|Проп', 'wrap');
put('A7', 'Gofis', 'yellow b l team');
put('B7', 'Игр ГОСТЕЙ|В|Н|П|Заб|Проп|Очки|Место||ОЧНЫЕ ГОСТЕЙ|В|Н|П|Заб|Проп', 'wrap');
[2, 8].forEach(r => { down('A' + r, 'Общая|Дом|Гости|Форма 5 Общ', 'l'); down('J' + r, 'Общая|Дома|В Гостях', 'l'); });
put('B2', '16|10|3|3|36|15|33|1||5|3|0|2|8|11');
put('B3', '8|6|0|2|20|8|18|1||3|1|0|2|4|9');
put('B4', '8|4|3|1|16|7|15|2||2|2|0|0|4|2');
put('B5', '16|10|3|3|36|15|33|1');
put('B8', '16|1|5|10|18|39|8|14||5|2|0|3|11|8');
put('B9', '9|0|4|5|6|20|4|14||3|0|0|2|2|4');
put('B10', '7|1|1|5|12|19|4|14||2|2|0|1|9|4');
put('B11', '16|1|5|10|18|39|8|14');

fill('D12:H12', 'peach'); fill('D13:G13', 'peach'); outline('D12:G13'); outline('H12');
put('D12', '6|1'); put('D13', '7|2'); put('F12', '16|8,06', 'r'); put('H12', 'Over', 'l');
fill('J12:O13', 'peach'); outline('J12:O13');
put('J12', '75%|7%|14%||96%|-4%', 'r'); put('J13', '76%|8%|16%||100%|-1%', 'r');
put('G14', '0,41|0,19'); put('L14', '0,19|0,63'); box('G14:H14'); box('L14:M14');

/* bets table */
box('B16:B36'); box('E16:E36');
fill('C16:C36', 'yellow'); fill('D16:D36', 'orange'); outline('C16:C36'); outline('D16:D36');
merge('B15:C15', '1 Команда', 'blue'); merge('D15:E15', '2 Команда', 'blue');
[[16, '10|6,25%|0,63%|10'], [20, '30|22,50%|0,00%|5'], [24, '5|2,50%|4,29%|30'], [28, '30|18,75%|1,88%|30']].forEach(([r, v]) => {
  put('B' + r, v, 'b'); fill('B' + r, 'green'); fill('E' + r, 'green');
});

/* results by venue */
down('J15', 'Общая|Побед|Ничья|Проигрыш|Дом|Побед|Ничья|Проигрыш|Гости|Побед|Ничья|Проигрыш|Форма|Побед|Ничья|Проигрыш|Очные|Общая|Побед|Ничья|Проигрыш|Дом');
[15, 19, 23, 27, 31, 32, 36].forEach(r => fill('J' + r, 'lime'));
box('J15:J36');
merge('G15:H15', 'Rothis', 'lime'); merge('L15:M15', 'Gofis', 'lime');
const left = ['0,63|0,19|0,19', '0,75|0,00|0,25', '0,50|0,38|0,13', '0,625|0,1875|0,1875', '0,60|0,00|0,40'];
const right = ['0,06|0,31|0,63', '0,00|0,44|0,56', '0,14|0,14|0,71', '0,0625|0,3125|0,625', '0,40|0,00|0,60'];
[[16, 'cream'], [20, 'gold1'], [24, 'gold2'], [28, 'gold3'], [33, 'grey']].forEach(([r, color], i) => {
  fill(`J${r}:J${r + 2}`, color);
  left[i].split('|').forEach((v, k) => merge(`G${r + k}:H${r + k}`, v, color));
  right[i].split('|').forEach((v, k) => merge(`L${r + k}:M${r + k}`, v, color));
});
[19, 23, 27].forEach(r => { merge(`G${r}:H${r}`, '', 'white'); merge(`L${r}:M${r}`, '', 'white'); });

/* odds blocks */
[[15, 'Общая'], [19, 'Дом'], [23, 'Гости'], [27, 'Форма']].forEach(([r, name]) => {
  put('O' + r, name + '|1|X|2'); fill('O' + r, 'lime'); box(`O${r}:R${r}`);
});
put('P16', '62,50%|24,53%|6,70%'); put('P20', '75,00%|22,22%|0,00%');
put('P24', '50,00%|25,89%|14,29%'); put('P28', '62,50%|25,00%', 'r'); put('R28', '6,25%');
[15, 20, 27, 31].forEach(r => { put('T' + r, '1|X|2'); box(`T${r}:V${r}`); });
put('T16', '62,50%|24,41%|6,81%'); put('W16', '93,72%', 'r');
put('T21', '75,00%|24,06%|14,29%|113,34%', 'r');
put('T28', '62,50%|25,00%'); put('V28', '6,25%|93,75%', 'r');
put('W31', '100,27%', 'r'); put('T32', '67%'); put('U32', '24,49%|9,11%|100%', 'r');
put('T34', '-0,09%', 'r');

/* averages */
put('O30', 'Общая|Дом|Гости|Форма 5|Среднее', 'black');
put('N31', 'В %', 'black'); put('N32', 'Н %', 'black'); put('N33', 'П %', 'black');
put('N35', 'В %', 'black'); put('N36', 'Н %', 'black');
put('O31', '0,625|0,75|0,5|0,625|0,625', 'r');
put('O32', '0,1875|0|0,375|0,1875|0,1875', 'r');
put('O33', '0,1875|0,25|0,125|0,1875|0,1875', 'r');
put('S34', '63%', 'r yellow'); outline('S34');
put('O35', '0,0625|0|0,142857|0,0625|0,06696429', 'r');
put('O36', '0,3125|0,4444444|0,142857|0,3125|0,3030754', 'r');

/* forecasts */
put('S3', 'Тотал', 'lime'); put('T3', '4', 'yellow'); box('S3:T3');
fill('S5:U5', 'orange'); fill('W5:Y5', 'orange'); fill('AA5:AC5', 'orange');
fill('S6:U6', 'yellow'); fill('W6:Y6', 'yellow'); fill('AA6:AC6', 'yellow');
['S5', 'W5', 'AA5'].forEach(ref => put(ref, '1|X|2'));
box('S5:U6'); box('W5:Y6'); box('AA5:AC6');
merge('S4:U4', 'Прогноз 1', 'green'); merge('W4:Y4', 'Прогноз 2', 'green'); merge('AA4:AC4', 'Прогноз 3', 'green');
put('S6', '67%|24%|9%'); put('V6', '100%', 'r'); outline('V6');
put('W6', '70,54%|15,18%|14,29%|100,00%'); put('AA6', '75,00%|3,57%|21,43%', 'r');
put('S8', '1К|ТС|2К', 'lime'); put('S9', '2||2'); fill('S9', 'yellow'); fill('U9', 'yellow');
box('S8:U8'); box('S9'); box('U9');
merge('S11:S12', 'Pa(B1)=', 'yellow'); merge('T11:U11', 'P(B1)*PB1(A)', 'yellow'); merge('T12:U12', 'P(A)', 'yellow');
merge('S13:V13', 'P(A)=P(B1)*PB1(A)+P(B2)*PB2(A)', 'yellow');
cells[10][18].noRight = true;

fill('W8:Z13', 'silver'); outline('W8:Z13');
put('W8', '105,94%|1,67%', 'r'); put('W9', '7,03%|18,35%', 'r'); put('W10', '7,03%', 'r'); put('X10', '79,37%');
put('Z11', '8,04%'); put('W12', '0,00%||14,29%|24,11%', 'r'); put('W13', '62,50%|7,14%|6,25%|75,89%', 'r');
put('AB8', '1,59375|3,375'); put('AB9', '1,78125|Нет'); put('AB10', '0|0', 'l yellow'); put('AB11', '0|0', 'l yellow');
box('AB8:AC11'); merge('AB12:AC12', '0,00', 'yellow');

put('Y17', '66,57642|24,39925|9,024333'); put('Y18', '1,502033|4,098487|11,08115');
put('Y20', '70,53571|15,17857|14,28571'); put('Y21', '1,42|6,59|7,00', 'r');
fill('Y23:AA28', 'rust'); box('Y23:AA28'); put('Y23', 'Win|X|Lose'); put('Y25', '69%|50%');
put('Z32', '75,00%|0,00%|75,00%', 'r'); put('Z33', '14,29%|7,14%|21,43%', 'r'); put('AB34', '3,57%', 'r');
fill('S1', 'active'); outline('S1');

/* render */
const table = document.getElementById('grid');
const total = WIDTHS.reduce((a, b) => a + b, 17);
table.style.width = total + 'px';
let html = '<colgroup>' + [17, ...WIDTHS].map(w => `<col style="width:${w}px">`).join('') + '</colgroup>';
html += '<thead><tr class="h13"><th></th>' + NAMES.map(n => `<th scope="col"${n === 'S' ? ' class="sel"' : ''}>${n}</th>`).join('') + '</tr></thead><tbody>';
cells.forEach((row, r) => {
  html += `<tr class="h${HEIGHTS[r]}"><th scope="row"${r === 0 ? ' class="sel"' : ''}>${r + 1}</th>`;
  row.forEach((cell, c) => {
    if (cell.hidden) return;
    let attrs = '';
    if (cell.span) {
      const [rs, cs] = cell.span;
      if (cells[r][c + cs - 1].cls.has('kr')) cell.cls.add('kr'); else cell.cls.delete('kr');
      if (cells[r + rs - 1][c].cls.has('kb')) cell.cls.add('kb');
      attrs = (rs > 1 ? ` rowspan="${rs}"` : '') + (cs > 1 ? ` colspan="${cs}"` : '');
    }
    if (cell.noRight) cell.cls.delete('kr');
    html += `<td${attrs}${cell.cls.size ? ` class="${[...cell.cls].join(' ')}"` : ''}>${cell.text}</td>`;
  });
  html += '</tr>';
});
table.innerHTML = html + '</tbody>';
```
